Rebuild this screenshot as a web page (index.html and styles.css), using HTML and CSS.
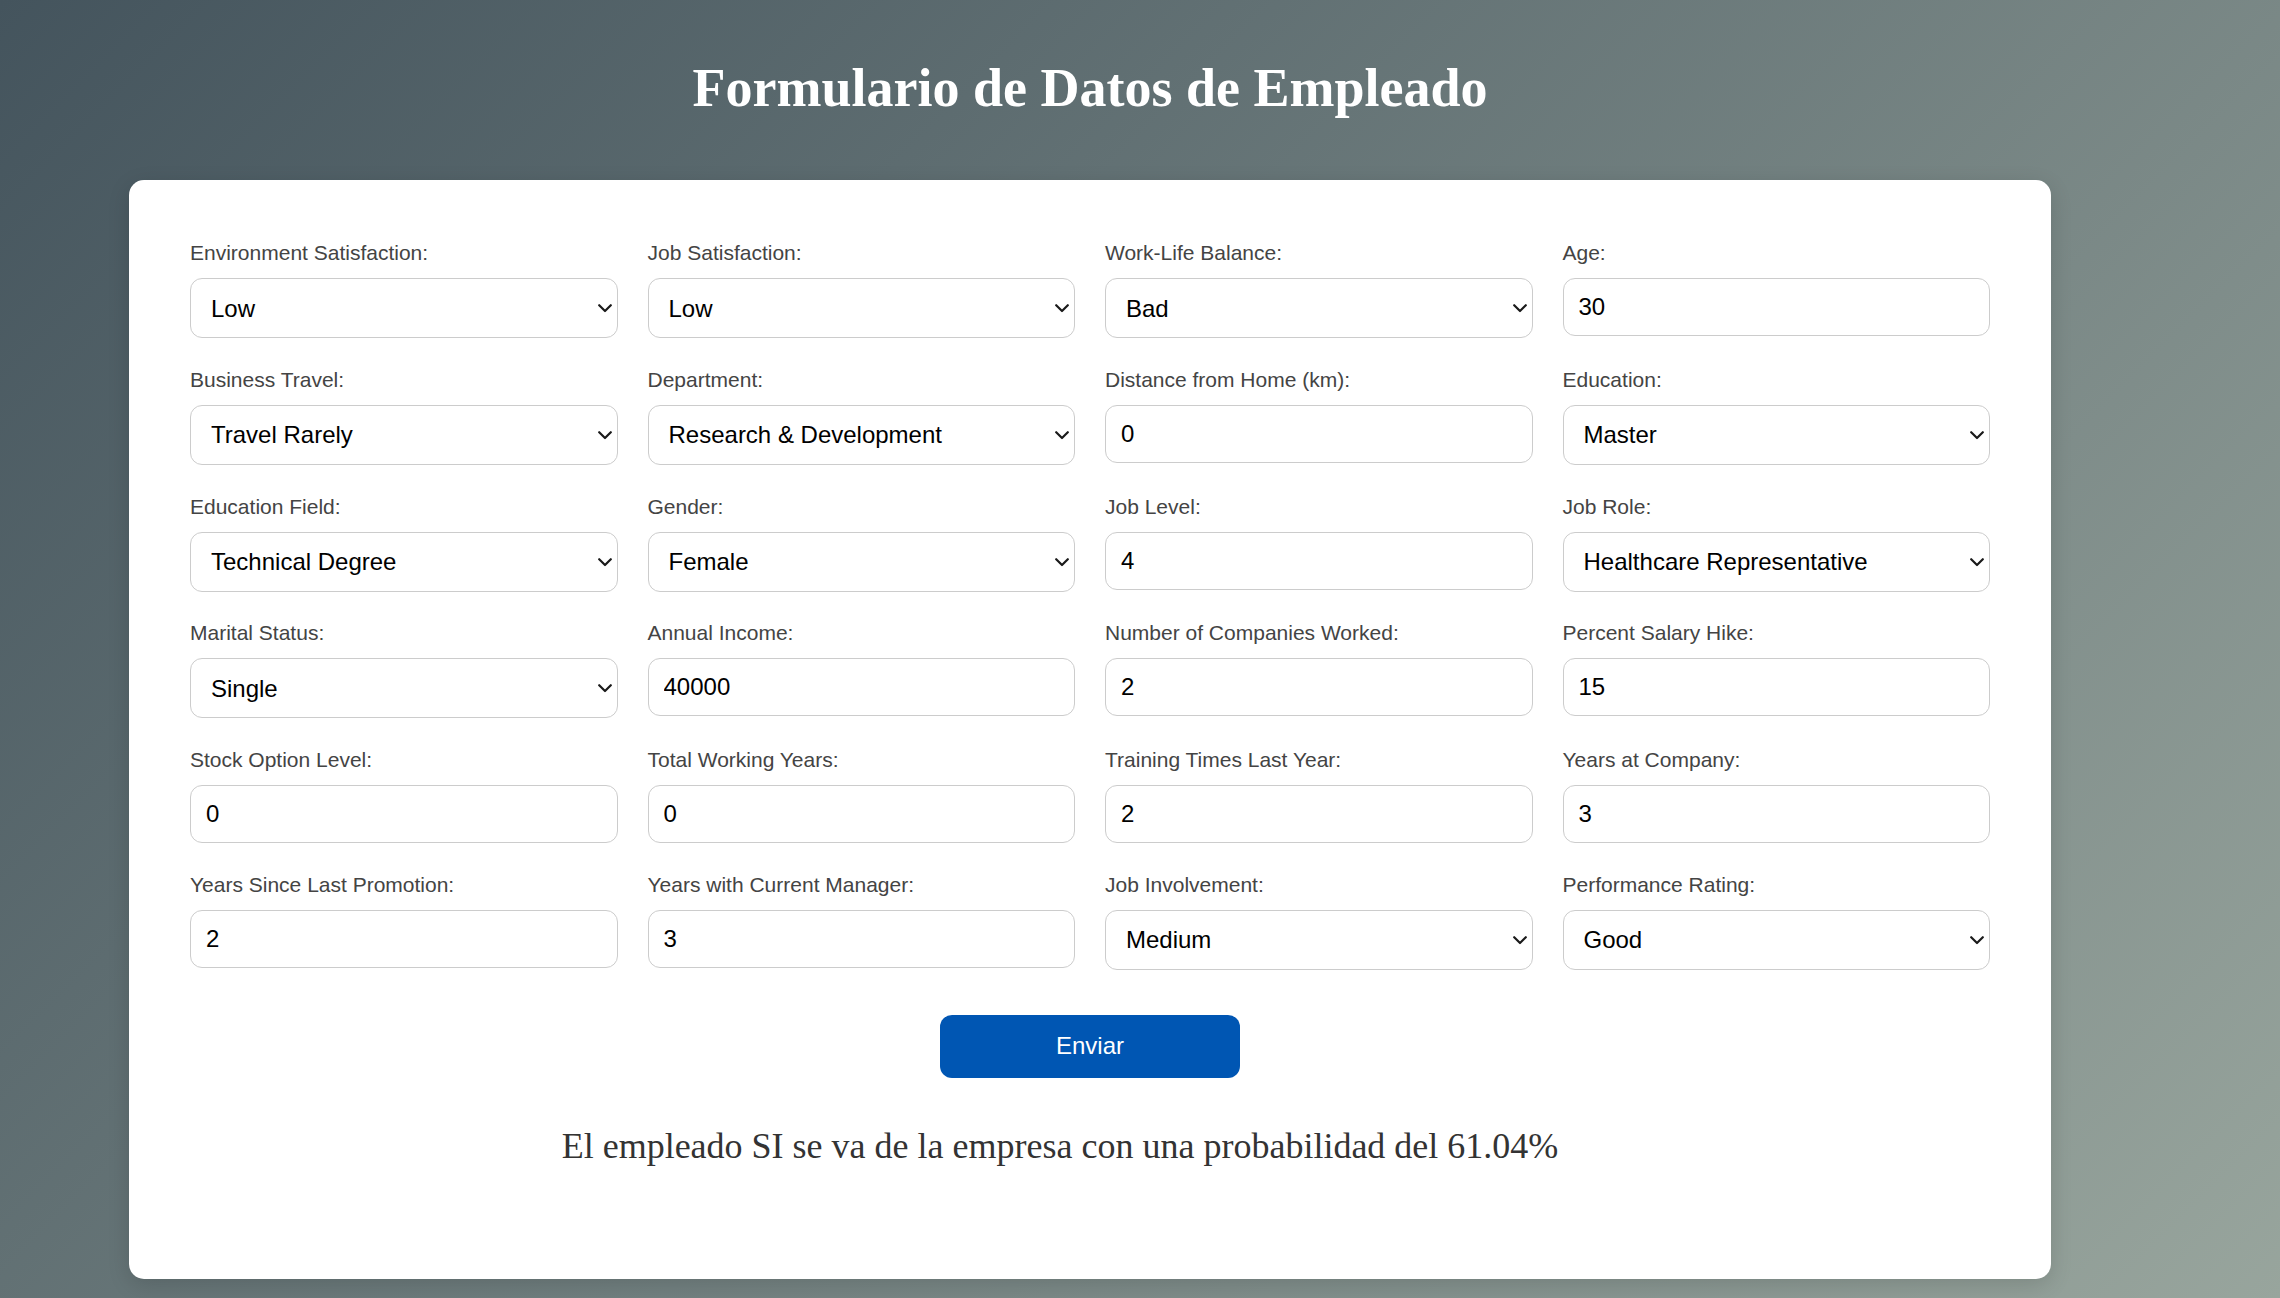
FILE: index.html
```html
<!DOCTYPE html>
<html lang="es">
<head>
<meta charset="utf-8">
<title>Formulario de Datos de Empleado</title>
<link rel="stylesheet" href="styles.css">
</head>
<body>
<div class="page">
  <h1 class="title">Formulario de Datos de Empleado</h1>
  <form class="card">
    <div class="grid">
      <div class="field"><label class="label">Environment Satisfaction:</label><div class="select-wrap"><select class="control select"><option>Low</option></select><svg class="chev" viewBox="0 0 14 9" width="14" height="9"><polyline points="1.2,1.2 7,7 12.8,1.2"/></svg></div></div>
      <div class="field"><label class="label">Job Satisfaction:</label><div class="select-wrap"><select class="control select"><option>Low</option></select><svg class="chev" viewBox="0 0 14 9" width="14" height="9"><polyline points="1.2,1.2 7,7 12.8,1.2"/></svg></div></div>
      <div class="field"><label class="label">Work-Life Balance:</label><div class="select-wrap"><select class="control select"><option>Bad</option></select><svg class="chev" viewBox="0 0 14 9" width="14" height="9"><polyline points="1.2,1.2 7,7 12.8,1.2"/></svg></div></div>
      <div class="field"><label class="label">Age:</label><input class="control input" type="text" value="30"></div>

      <div class="field"><label class="label">Business Travel:</label><div class="select-wrap"><select class="control select"><option>Travel Rarely</option></select><svg class="chev" viewBox="0 0 14 9" width="14" height="9"><polyline points="1.2,1.2 7,7 12.8,1.2"/></svg></div></div>
      <div class="field"><label class="label">Department:</label><div class="select-wrap"><select class="control select"><option>Research &amp; Development</option></select><svg class="chev" viewBox="0 0 14 9" width="14" height="9"><polyline points="1.2,1.2 7,7 12.8,1.2"/></svg></div></div>
      <div class="field"><label class="label">Distance from Home (km):</label><input class="control input" type="text" value="0"></div>
      <div class="field"><label class="label">Education:</label><div class="select-wrap"><select class="control select"><option>Master</option></select><svg class="chev" viewBox="0 0 14 9" width="14" height="9"><polyline points="1.2,1.2 7,7 12.8,1.2"/></svg></div></div>

      <div class="field"><label class="label">Education Field:</label><div class="select-wrap"><select class="control select"><option>Technical Degree</option></select><svg class="chev" viewBox="0 0 14 9" width="14" height="9"><polyline points="1.2,1.2 7,7 12.8,1.2"/></svg></div></div>
      <div class="field"><label class="label">Gender:</label><div class="select-wrap"><select class="control select"><option>Female</option></select><svg class="chev" viewBox="0 0 14 9" width="14" height="9"><polyline points="1.2,1.2 7,7 12.8,1.2"/></svg></div></div>
      <div class="field"><label class="label">Job Level:</label><input class="control input" type="text" value="4"></div>
      <div class="field"><label class="label">Job Role:</label><div class="select-wrap"><select class="control select"><option>Healthcare Representative</option></select><svg class="chev" viewBox="0 0 14 9" width="14" height="9"><polyline points="1.2,1.2 7,7 12.8,1.2"/></svg></div></div>

      <div class="field"><label class="label">Marital Status:</label><div class="select-wrap"><select class="control select"><option>Single</option></select><svg class="chev" viewBox="0 0 14 9" width="14" height="9"><polyline points="1.2,1.2 7,7 12.8,1.2"/></svg></div></div>
      <div class="field"><label class="label">Annual Income:</label><input class="control input" type="text" value="40000"></div>
      <div class="field"><label class="label">Number of Companies Worked:</label><input class="control input" type="text" value="2"></div>
      <div class="field"><label class="label">Percent Salary Hike:</label><input class="control input" type="text" value="15"></div>

      <div class="field"><label class="label">Stock Option Level:</label><input class="control input" type="text" value="0"></div>
      <div class="field"><label class="label">Total Working Years:</label><input class="control input" type="text" value="0"></div>
      <div class="field"><label class="label">Training Times Last Year:</label><input class="control input" type="text" value="2"></div>
      <div class="field"><label class="label">Years at Company:</label><input class="control input" type="text" value="3"></div>

      <div class="field"><label class="label">Years Since Last Promotion:</label><input class="control input" type="text" value="2"></div>
      <div class="field"><label class="label">Years with Current Manager:</label><input class="control input" type="text" value="3"></div>
      <div class="field"><label class="label">Job Involvement:</label><div class="select-wrap"><select class="control select"><option>Medium</option></select><svg class="chev" viewBox="0 0 14 9" width="14" height="9"><polyline points="1.2,1.2 7,7 12.8,1.2"/></svg></div></div>
      <div class="field"><label class="label">Performance Rating:</label><div class="select-wrap"><select class="control select"><option>Good</option></select><svg class="chev" viewBox="0 0 14 9" width="14" height="9"><polyline points="1.2,1.2 7,7 12.8,1.2"/></svg></div></div>
    </div>
    <div class="actions">
      <button class="submit" type="button">Enviar</button>
    </div>
    <p class="result">El empleado SI se va de la empresa con una probabilidad del 61.04%</p>
  </form>
</div>
</body>
</html>
```

FILE: styles.css
```css
html, body {
  margin: 0;
  padding: 0;
  height: 100%;
}

body {
  background: linear-gradient(135deg, #44545d 0%, #98a59d 100%);
  background-attachment: fixed;
  font-family: "Liberation Sans", Arial, sans-serif;
  overflow: hidden;
}

.page {
  width: 1922px;
  margin-left: 129px;
}

.title {
  margin: 58px 0 62px;
  font-family: "Liberation Serif", "Times New Roman", serif;
  font-weight: bold;
  font-size: 54px;
  line-height: 60px;
  color: #ffffff;
  text-align: center;
}

.card {
  display: block;
  background: #ffffff;
  border-radius: 15px;
  box-shadow: 0 6px 22px rgba(0, 0, 0, 0.14);
  padding: 61px 61px 0;
  height: 1099px;
  box-sizing: border-box;
}

.grid {
  display: grid;
  grid-template-columns: repeat(4, 1fr);
  column-gap: 30px;
  row-gap: 29.75px;
}

.field {
  display: flex;
  flex-direction: column;
  align-items: stretch;
}

.label {
  display: block;
  font-size: 21px;
  line-height: 24px;
  color: #444444;
  margin-bottom: 13px;
}

.control {
  box-sizing: border-box;
  width: 100%;
  border: 1.5px solid #cccccc;
  border-radius: 12px;
  font-family: "Liberation Sans", Arial, sans-serif;
  font-size: 24px;
  color: #000000;
  background: #ffffff;
  margin: 0;
}

.select-wrap {
  position: relative;
}

.select {
  display: block;
  height: 60px;
  padding: 0 40px 0 20px;
  -webkit-appearance: none;
  appearance: none;
}

.chev {
  position: absolute;
  right: 6px;
  top: 26px;
  width: 14px;
  height: 9px;
  pointer-events: none;
}

.chev polyline {
  fill: none;
  stroke: #1a1a1a;
  stroke-width: 2.2;
  stroke-linecap: round;
  stroke-linejoin: round;
}

.input {
  height: 58px;
  padding: 0 15px;
}

.actions {
  display: flex;
  justify-content: center;
  margin-top: 45px;
}

.submit {
  width: 300px;
  height: 63px;
  border: none;
  border-radius: 12px;
  background: #0056b3;
  color: #ffffff;
  font-family: "Liberation Sans", Arial, sans-serif;
  font-size: 24px;
  padding: 0;
}

.result {
  margin: 47px 0 0;
  padding-right: 60px;
  font-family: "Liberation Serif", "Times New Roman", serif;
  font-size: 36px;
  line-height: 42px;
  color: #333333;
  text-align: center;
}
```
